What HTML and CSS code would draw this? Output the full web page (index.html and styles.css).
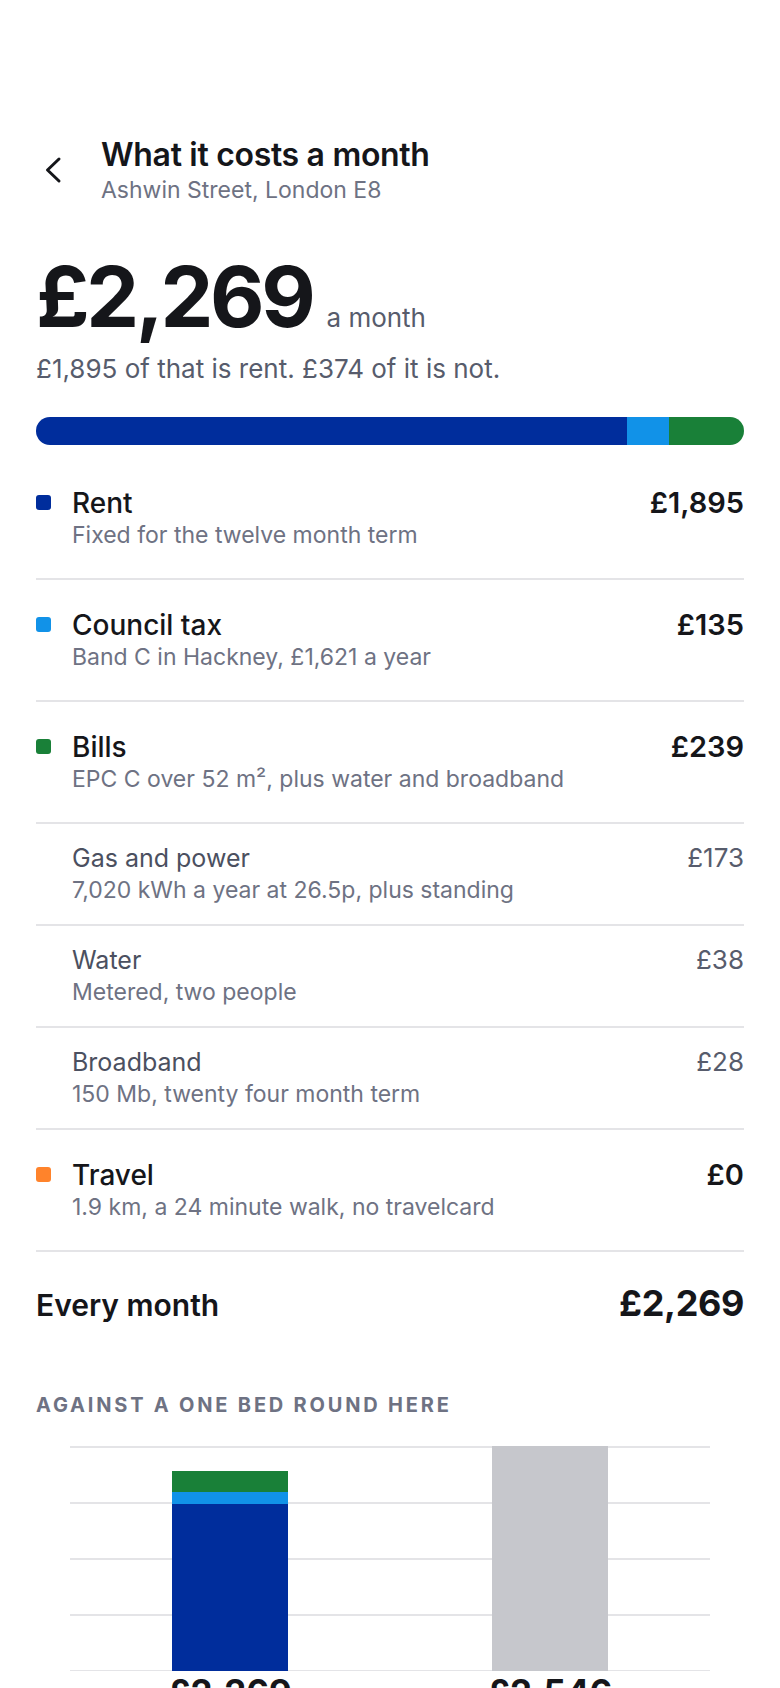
FILE: index.html
```html
<!DOCTYPE html>
<html>
<head>
    <title>What it costs a month</title>
    <link rel="stylesheet" href="styles.css">
</head>
<body>
    <div class="page">
        <header class="top">
            <button class="back" aria-label="Back">
                <svg width="20" height="30" viewBox="0 0 20 30" fill="none" stroke="#15161a" stroke-width="3" stroke-linecap="round" stroke-linejoin="round"><path d="M16 4 L4.5 15 L16 26"/></svg>
            </button>
            <div class="titles">
                <h1>What it costs a month</h1>
                <p class="place">Ashwin Street, London E8</p>
            </div>
        </header>

        <section class="total">
            <div class="big">
                <span class="amount">£2,269</span>
                <span class="per">a month</span>
            </div>
            <p class="summary">£1,895 of that is rent. £374 of it is not.</p>
        </section>

        <div class="stack">
            <span class="seg rent" style="width: 83.52%"></span>
            <span class="seg tax" style="width: 5.95%"></span>
            <span class="seg bills" style="width: 10.53%"></span>
        </div>

        <ul class="lines">
            <li class="line">
                <span class="dot rent"></span>
                <div class="what">
                    <div class="name">Rent</div>
                    <div class="note">Fixed for the twelve month term</div>
                </div>
                <div class="cost">£1,895</div>
            </li>
            <li class="line">
                <span class="dot tax"></span>
                <div class="what">
                    <div class="name">Council tax</div>
                    <div class="note">Band C in Hackney, £1,621 a year</div>
                </div>
                <div class="cost">£135</div>
            </li>
            <li class="line">
                <span class="dot bills"></span>
                <div class="what">
                    <div class="name">Bills</div>
                    <div class="note">EPC C over 52 m², plus water and broadband</div>
                </div>
                <div class="cost">£239</div>
            </li>
            <li class="line sub">
                <span class="dot none"></span>
                <div class="what">
                    <div class="name">Gas and power</div>
                    <div class="note">7,020 kWh a year at 26.5p, plus standing</div>
                </div>
                <div class="cost">£173</div>
            </li>
            <li class="line sub">
                <span class="dot none"></span>
                <div class="what">
                    <div class="name">Water</div>
                    <div class="note">Metered, two people</div>
                </div>
                <div class="cost">£38</div>
            </li>
            <li class="line sub">
                <span class="dot none"></span>
                <div class="what">
                    <div class="name">Broadband</div>
                    <div class="note">150 Mb, twenty four month term</div>
                </div>
                <div class="cost">£28</div>
            </li>
            <li class="line">
                <span class="dot travel"></span>
                <div class="what">
                    <div class="name">Travel</div>
                    <div class="note">1.9 km, a 24 minute walk, no travelcard</div>
                </div>
                <div class="cost">£0</div>
            </li>
        </ul>

        <div class="sum">
            <span class="sum-label">Every month</span>
            <span class="sum-value">£2,269</span>
        </div>

        <section class="compare">
            <h2>Against a one bed round here</h2>
            <div class="chart">
                <div class="plot">
                    <div class="col">
                        <div class="bar" style="height: 200px">
                            <span class="seg bills" style="height: 21px"></span>
                            <span class="seg tax" style="height: 12px"></span>
                            <span class="seg rent" style="flex: 1"></span>
                        </div>
                    </div>
                    <div class="col">
                        <div class="bar other" style="height: 225px"></div>
                    </div>
                </div>
                <div class="labels">
                    <span>£2,269</span>
                    <span>£2,546</span>
                </div>
            </div>
        </section>
    </div>
</body>
</html>
```

FILE: styles.css
```css
body {
    margin: 0;
    font-family: Inter, "Noto Sans", sans-serif;
    color: #15161a;
    background: #fff;
}
.page {
    padding: 136px 36px 0;
}
.top {
    display: flex;
    align-items: center;
    gap: 38px;
}
.back {
    background: none;
    border: none;
    padding: 0;
    margin-left: 7px;
    width: 20px;
    height: 30px;
    display: flex;
}
h1 {
    font-size: 32px;
    font-weight: 600;
    line-height: 38px;
    margin: 0;
    letter-spacing: -0.01em;
}
.place {
    margin: 2px 0 0;
    font-size: 23px;
    line-height: 28px;
    color: #6e7283;
}
.total {
    margin-top: 47px;
}
.big {
    display: flex;
    align-items: baseline;
    gap: 14px;
}
.amount {
    font-size: 84px;
    font-weight: 700;
    line-height: 92px;
    letter-spacing: -0.04em;
}
.per {
    font-size: 26px;
    color: #575c6c;
}
.summary {
    margin: 10px 0 0;
    font-size: 26px;
    line-height: 32px;
    color: #575c6c;
}
.stack {
    display: flex;
    height: 28px;
    border-radius: 14px;
    overflow: hidden;
    margin-top: 32px;
}
.rent { background: #002d9c; }
.tax { background: #1192e8; }
.bills { background: #198038; }
.travel { background: #ff832b; }
.lines {
    list-style: none;
    margin: 13px 0 0;
    padding: 0;
}
.line {
    display: flex;
    align-items: flex-start;
    padding: 28px 0 29px;
    border-bottom: 2px solid #e4e4e7;
}
.dot {
    width: 15px;
    height: 15px;
    border-radius: 3px;
    margin: 9px 21px 0 0;
    flex: none;
}
.dot.none {
    background: none;
}
.what {
    flex: 1;
}
.name {
    font-size: 28px;
    font-weight: 500;
    line-height: 34px;
}
.note {
    margin-top: 1px;
    font-size: 23px;
    line-height: 28px;
    color: #6e7283;
}
.cost {
    font-size: 29px;
    font-weight: 600;
    line-height: 34px;
}
.line.sub {
    padding: 19px 0 20px;
}
.line.sub .name {
    font-size: 25px;
    font-weight: 400;
    line-height: 30px;
    color: #4b5060;
}
.line.sub .note {
    margin-top: 3px;
}
.line.sub .cost {
    font-size: 26px;
    font-weight: 400;
    line-height: 30px;
    color: #575c6c;
}
.sum {
    display: flex;
    justify-content: space-between;
    align-items: baseline;
    padding-top: 29px;
}
.sum-label {
    font-size: 30px;
    font-weight: 600;
}
.sum-value {
    font-size: 36px;
    font-weight: 700;
    letter-spacing: -0.01em;
}
.compare {
    margin-top: 68px;
}
h2 {
    margin: 0;
    font-size: 20px;
    font-weight: 700;
    line-height: 24px;
    letter-spacing: 0.14em;
    text-transform: uppercase;
    color: #6e7283;
}
.chart {
    margin: 29px 34px 0;
}
.plot {
    display: flex;
    align-items: flex-end;
    height: 225px;
    background: repeating-linear-gradient(to bottom, #e4e4e7 0, #e4e4e7 2px, transparent 2px, transparent 56px);
}
.col {
    flex: 1;
    display: flex;
    justify-content: center;
}
.bar {
    width: 116px;
    display: flex;
    flex-direction: column;
}
.bar.other {
    background: #c6c7cc;
}
.labels {
    display: flex;
}
.labels span {
    flex: 1;
    text-align: center;
    font-size: 35px;
    font-weight: 700;
    line-height: 42px;
}
```
